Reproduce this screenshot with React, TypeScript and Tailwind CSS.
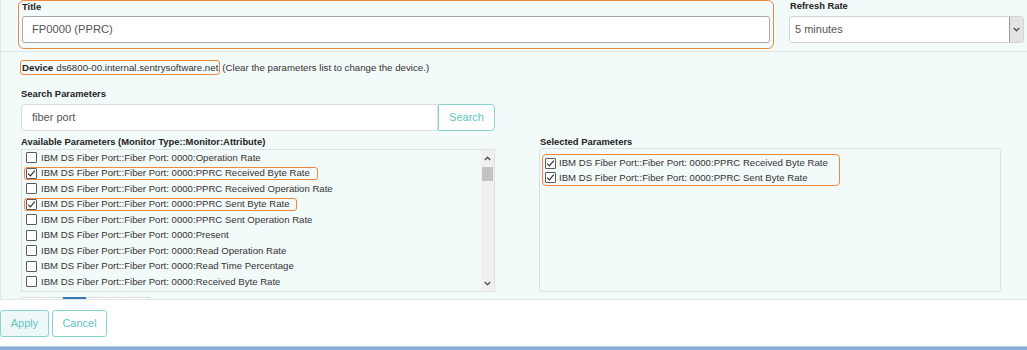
import React from "react";

const font = { fontFamily: '"Liberation Sans", Arial, sans-serif' };

const prefix = "IBM DS Fiber Port::Fiber Port: 0000:";
const available: { name: string; checked?: boolean }[] = [
  { name: "Operation Rate" },
  { name: "PPRC Received Byte Rate", checked: true },
  { name: "PPRC Received Operation Rate" },
  { name: "PPRC Sent Byte Rate", checked: true },
  { name: "PPRC Sent Operation Rate" },
  { name: "Present" },
  { name: "Read Operation Rate" },
  { name: "Read Time Percentage" },
  { name: "Received Byte Rate" },
  { name: "Received Operation Rate" },
];

function Checkbox({ checked }: { checked?: boolean }) {
  return (
    <span className="flex h-[11px] w-[11px] shrink-0 items-center justify-center rounded-[1px] border border-[#5a5a5a] bg-white">
      {checked && (
        <svg width="9" height="9" viewBox="0 0 9 9">
          <polyline points="1.2,4.6 3.4,6.8 7.8,1.6" fill="none" stroke="#333" strokeWidth="1.2" />
        </svg>
      )}
    </span>
  );
}

function Chevron({ up }: { up?: boolean }) {
  return (
    <svg width="7" height="5" viewBox="0 0 7 5">
      <polyline
        points={up ? "0.8,4 3.5,1.2 6.2,4" : "0.8,1 3.5,3.8 6.2,1"}
        fill="none"
        stroke="#505050"
        strokeWidth="1.4"
      />
    </svg>
  );
}

export default function App() {
  return (
    <div className="h-[350px] w-[1027px] overflow-hidden bg-white text-[#333]" style={font}>
      <div className="h-[300px] overflow-hidden border-b border-l border-[#e1e7e7] bg-[#f2fafa]">
        {/* Row 1 */}
        <div className="flex items-start">
          <div className="ml-[17px] h-[49px] w-[756px] rounded-[6px] border border-[#f0883e] px-[3px]">
            <div className="h-[15px] text-[9.4px] font-bold leading-[12px] text-[#222]">Title</div>
            <div className="flex h-[27px] items-center rounded-[3px] border border-[#a8a8a8] bg-white pl-[9px] text-[11.2px] text-[#555]">
              FP0000 (PPRC)
            </div>
          </div>
          <div className="ml-[15px] w-[235px]">
            <div className="h-[16px] pl-[1px] text-[9.4px] font-bold leading-[12px] text-[#222]">Refresh Rate</div>
            <div className="flex h-[27px] items-stretch rounded-[3px] border border-[#cfd4d4] bg-white">
              <div className="flex flex-1 items-center pl-[5px] text-[11px] text-[#555]">5 minutes</div>
              <div className="flex w-[14px] items-center justify-center rounded-r-[3px] border-l border-[#9c9c9c] bg-[#e3e3e3]">
                <Chevron />
              </div>
            </div>
          </div>
        </div>

        <div className="mt-[2px] border-t border-[#dfe6e6]" />

        {/* Device row */}
        <div className="mt-[8px] flex items-center">
          <div className="ml-[19px] flex h-[15px] items-center rounded-[3px] border border-[#f0883e] px-[1px] text-[9.7px] leading-none whitespace-nowrap">
            <span className="font-bold text-[#222]">Device</span>
            <span className="ml-[3px]">ds6800-00.internal.sentrysoftware.net</span>
          </div>
          <span className="ml-[2px] text-[9.7px] leading-none whitespace-nowrap">
            (Clear the parameters list to change the device.)
          </span>
        </div>

        {/* Search */}
        <div className="ml-[20px] mt-[13px] h-[16px] text-[9.4px] font-bold leading-[12px] text-[#222]">Search Parameters</div>
        <div className="ml-[20px] flex h-[27px] w-[474px]">
          <div className="flex flex-1 items-center rounded-l-[4px] border border-[#dcdcdc] bg-white pl-[10px] text-[11px] text-[#555]">
            fiber port
          </div>
          <div className="flex w-[57px] items-center justify-center rounded-r-[4px] border border-[#86d6cf] bg-white text-[11px] text-[#5cc6bd]">
            Search
          </div>
        </div>

        {/* Lists */}
        <div className="mt-[5px] flex items-start">
          <div className="ml-[20px] w-[474px]">
            <div className="h-[13px] text-[9.4px] font-bold leading-[12px] text-[#222]">
              Available Parameters (Monitor Type::Monitor:Attribute)
            </div>
            <div className="flex h-[143px] border border-[#dbe2e2] bg-[#f3fafa]">
              <div className="flex-1 overflow-hidden">
                {available.map((it, i) => (
                  <div key={i} className="flex h-[15.5px] items-center">
                    <div
                      className={
                        "ml-[2px] flex h-[13px] items-center rounded-[3px] border pl-[1px] pr-[7px] " +
                        (it.checked ? "border-[#f0883e]" : "border-transparent")
                      }
                    >
                      <Checkbox checked={it.checked} />
                      <span className="ml-[4px] whitespace-nowrap text-[9.6px] leading-none text-[#333]">
                        {prefix}
                        {it.name}
                      </span>
                    </div>
                  </div>
                ))}
              </div>
              <div className="flex w-[13px] flex-col items-center bg-[#f0f0f0]">
                <div className="flex h-[17px] items-center justify-center">
                  <Chevron up />
                </div>
                <div className="h-[14px] w-[11px] bg-[#c3c3c3]" />
                <div className="flex-1" />
                <div className="flex h-[15px] items-center justify-center">
                  <Chevron />
                </div>
              </div>
            </div>
            <div className="mt-[5px] flex h-[20px]">
              <div className="w-[22px] border border-[#dddddd] bg-white" />
              <div className="w-[20px] border-y border-r border-[#dddddd] bg-white" />
              <div className="w-[23px] border-y border-r border-[#337ab7] bg-[#337ab7]" />
              <div className="w-[22px] border-y border-r border-[#dddddd] bg-white" />
              <div className="w-[20px] border-y border-r border-[#dddddd] bg-white" />
              <div className="w-[22px] border-y border-r border-[#dddddd] bg-white" />
            </div>
          </div>

          <div className="ml-[44px] w-[462px]">
            <div className="h-[12px] pl-[1px] text-[9.4px] font-bold leading-[12px] text-[#222]">Selected Parameters</div>
            <div className="h-[144px] rounded-[3px] border border-[#dbe2e2] bg-[#f3fafa] pt-[5px]">
              <div className="ml-[2px] w-[298px] rounded-[4px] border border-[#f0883e] pl-[2px] pt-[1px]">
                {available
                  .filter((a) => a.checked)
                  .map((it, i) => (
                    <div key={i} className="flex h-[14.5px] items-center">
                      <Checkbox checked />
                      <span className="ml-[3px] whitespace-nowrap text-[9.6px] leading-none text-[#333]">
                        {prefix}
                        {it.name}
                      </span>
                    </div>
                  ))}
              </div>
            </div>
          </div>
        </div>
      </div>

      {/* Footer buttons */}
      <div className="mt-[10px] flex h-[27px] gap-[3px]">
        <div className="flex w-[49px] items-center justify-center rounded-[3px] border border-[#86d6cf] bg-[#eef8f8] text-[11px] text-[#5cc6bd]">
          Apply
        </div>
        <div className="flex w-[55px] items-center justify-center rounded-[3px] border border-[#86d6cf] bg-white text-[11px] text-[#5cc6bd]">
          Cancel
        </div>
      </div>
      <div className="mt-[9px] h-[4px] border-t border-[#b3cbe6] bg-[#8aadd6]" />
    </div>
  );
}
